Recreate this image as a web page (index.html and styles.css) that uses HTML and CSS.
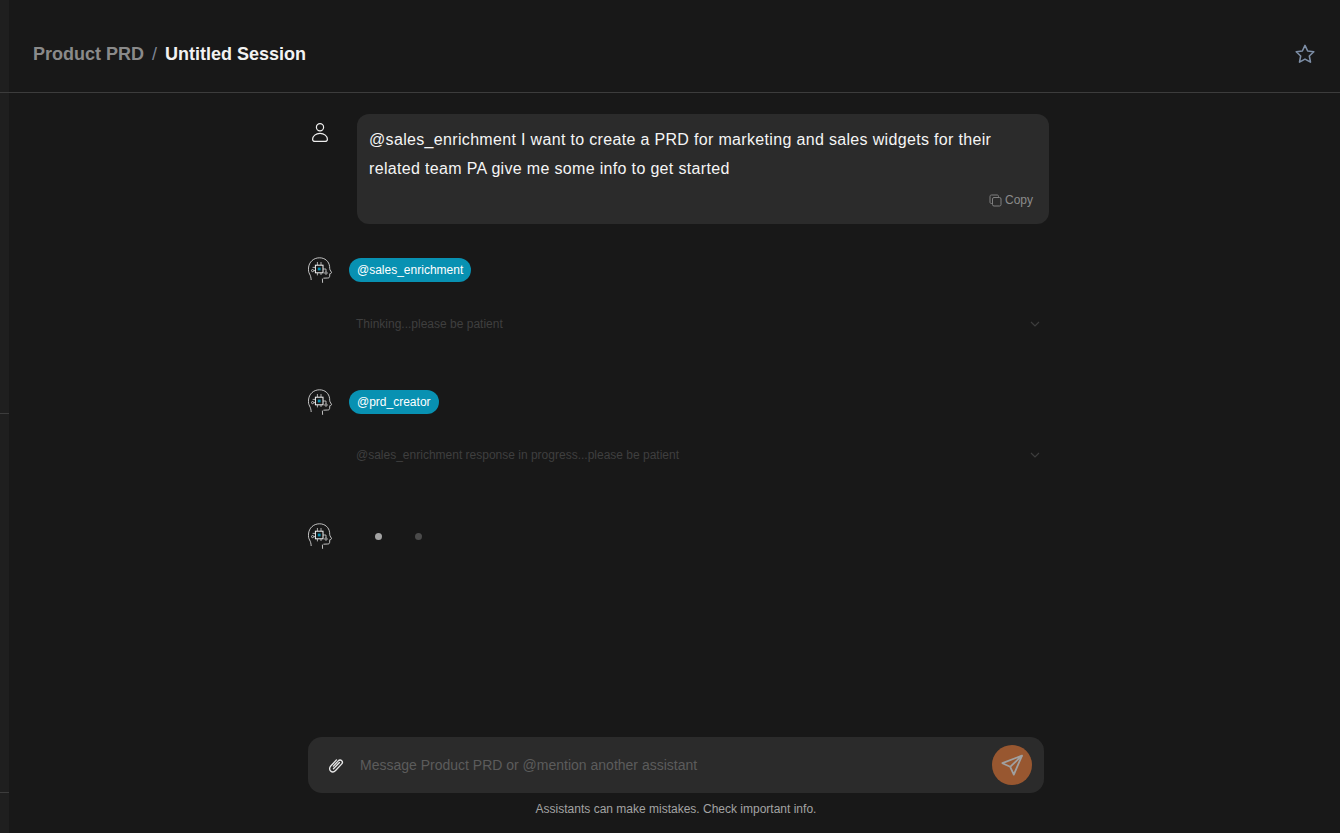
FILE: index.html
```html
<!DOCTYPE html>
<html lang="en">
<head>
  <meta charset="UTF-8">
  <meta name="viewport" content="width=device-width, initial-scale=1.0">
  <title>Product PRD</title>
  <link rel="stylesheet" href="styles.css">
</head>
<body>
  <svg class="defs" width="0" height="0" aria-hidden="true">
    <symbol id="bot" viewBox="0 0 24 26">
      <path d="M3.2 23 C3 20.4 2.6 18.8 1.6 17 C.6 15.2 .3 13.6 .5 11 C1 5 5.5 .8 11.5 .8 C17 .8 21 4.4 21.6 9.5 C21.7 11 21.6 12 22 12.8 L23.4 15.2 C23.7 15.8 23.4 16.3 22.6 16.5 L21.8 16.7 L21.6 19.6 C21.5 20.6 20.8 21 19.6 21 L15.4 21.2" fill="none" stroke="#ececec" stroke-width=".8"/>
      <path d="M14.4 21.6 L14.6 25.8" fill="none" stroke="#ececec" stroke-width=".8"/>
      <rect x="7.4" y="8.2" width="7.6" height="7.6" fill="none" stroke="#f5f5f5" stroke-width="1"/>
      <rect x="9.8" y="10.6" width="2.8" height="2.8" fill="#0891b2"/>
      <path d="M9.4 8 V5 M13 8 V5 M9.4 16 V18.4 M13 16 V18 M7.4 10.4 H4.6 M7.4 13.6 H5.8 M15 12 H18 V14.6" fill="none" stroke="#ececec" stroke-width=".7"/>
      <circle cx="4.6" cy="13.6" r="1.1" fill="none" stroke="#ececec" stroke-width=".7"/>
      <circle cx="18" cy="16" r="1.2" fill="none" stroke="#ececec" stroke-width=".7"/>
    </symbol>
    <symbol id="chevron" viewBox="0 0 12 12">
      <path d="M2 4 L6 8 L10 4" fill="none" stroke="#3d3d3d" stroke-width="1.2"/>
    </symbol>
  </svg>

  <aside class="rail">
    <div class="rail-top"></div>
    <div class="rail-mid"></div>
    <div class="rail-low"></div>
  </aside>

  <main class="main">
    <header class="topbar">
      <div class="crumbs">
        <span class="crumb-parent">Product PRD</span>
        <span class="crumb-sep">/</span>
        <span class="crumb-current">Untitled Session</span>
      </div>
      <button class="star" aria-label="Favourite">
        <svg width="22" height="22" viewBox="0 0 24 24" fill="none" stroke="#7d8ea6" stroke-width="1.7" stroke-linejoin="round">
          <path d="M12 2.6 L14.9 8.7 L21.6 9.6 L16.7 14.2 L18 20.9 L12 17.6 L6 20.9 L7.3 14.2 L2.4 9.6 L9.1 8.7 Z"/>
        </svg>
      </button>
    </header>

    <section class="chat">
      <div class="user-row">
        <svg class="user-icon" width="24" height="24" viewBox="0 0 24 24" fill="none" stroke="#eee" stroke-width="1.2">
          <circle cx="12" cy="6.2" r="3.6"/>
          <path d="M12 12.4 C7.8 12.4 4.6 15 4.6 18.2 C4.6 19.6 5.6 20.4 7 20.4 H17 C18.4 20.4 19.4 19.6 19.4 18.2 C19.4 15 16.2 12.4 12 12.4 Z"/>
        </svg>
        <div class="bubble">
          <p class="bubble-text">@sales_enrichment I want to create a PRD for marketing and sales widgets for their related team PA give me some info to get started</p>
          <div class="copy">
            <svg width="13" height="13" viewBox="0 0 13 13" fill="none" stroke="#808080" stroke-width="1">
              <rect x="3.5" y="3.5" width="8.5" height="8.5" rx="1.5"/>
              <path d="M3.5 9.5 H2.5 C1.4 9.5 1 9 1 8 V2.5 C1 1.5 1.5 1 2.5 1 H8 C9 1 9.5 1.4 9.5 2.5 V3.5"/>
            </svg>
            <span>Copy</span>
          </div>
        </div>
      </div>

      <div class="bot-row first">
        <svg class="bot-icon" width="24" height="26"><use href="#bot"/></svg>
        <span class="tag">@sales_enrichment</span>
      </div>
      <div class="status first-status">
        <span>Thinking...please be patient</span>
        <svg width="12" height="12"><use href="#chevron"/></svg>
      </div>

      <div class="bot-row second">
        <svg class="bot-icon" width="24" height="26"><use href="#bot"/></svg>
        <span class="tag">@prd_creator</span>
      </div>
      <div class="status second-status">
        <span>@sales_enrichment response in progress...please be patient</span>
        <svg width="12" height="12"><use href="#chevron"/></svg>
      </div>

      <div class="bot-row third">
        <svg class="bot-icon" width="24" height="26"><use href="#bot"/></svg>
        <div class="dots">
          <span class="dot bright"></span>
          <span class="dot dim"></span>
        </div>
      </div>
    </section>

    <footer class="composer">
      <div class="input-box">
        <svg class="clip" width="18" height="18" viewBox="0 0 24 24" fill="none" stroke="#e8e8e8" stroke-width="1.8" stroke-linecap="round">
          <path d="M8.5 13.5 L15 6.5 C16.4 5 18.4 5 19.6 6.2 C20.8 7.4 20.8 9.3 19.4 10.8 L11.4 19.4 C9.4 21.5 6.6 21.6 4.8 19.9 C3 18.2 3.1 15.4 5 13.4 L12.6 5.2"/>
          <path d="M8.6 17 L16.6 8.6"/>
        </svg>
        <span class="placeholder">Message Product PRD or @mention another assistant</span>
        <button class="send" aria-label="Send">
          <svg width="24" height="24" viewBox="0 0 24 24" fill="none" stroke="#a0a0a0" stroke-width="1.8" stroke-linejoin="round">
            <path d="M22 2.6 L2.4 10.2 L10.2 13.8 L13.8 21.6 Z"/>
            <path d="M10.2 13.8 L22 2.6"/>
          </svg>
        </button>
      </div>
      <p class="disclaimer">Assistants can make mistakes. Check important info.</p>
    </footer>
  </main>
</body>
</html>
```

FILE: styles.css
```css
*{
  padding: 0;
  margin: 0;
  box-sizing: border-box;
}
html, body{
  height: 100%;
}
body{
  display: flex;
  background-color: #181818;
  color: #fff;
  font-family: "Liberation Sans", Arial, sans-serif;
  overflow: hidden;
}
.defs{
  position: absolute;
}
.rail{
  width: 9px;
  flex-shrink: 0;
  background-color: #1f1f1f;
}
.rail-top{
  height: 93px;
  border-bottom: 1px solid #3c3c3c;
}
.rail-mid{
  height: 321px;
  border-bottom: 1px solid #3c3c3c;
}
.rail-low{
  height: 379px;
  border-bottom: 1px solid #3c3c3c;
}
.main{
  flex: 1;
  display: flex;
  flex-direction: column;
  min-width: 0;
}
.topbar{
  height: 93px;
  flex-shrink: 0;
  display: flex;
  align-items: center;
  justify-content: space-between;
  padding: 16px 24px 0 24px;
  border-bottom: 1px solid #3c3c3c;
}
.crumbs{
  display: flex;
  gap: 8px;
  font-size: 18px;
  font-weight: 700;
}
.crumb-parent{
  color: #8a8a8a;
}
.crumb-sep{
  color: #7d8494;
  font-weight: 400;
}
.crumb-current{
  color: #f2f2f2;
}
.star{
  display: flex;
  background: none;
  border: none;
}
.chat{
  flex: 1;
  width: 741px;
  margin-left: 299px;
}
.user-row{
  display: flex;
  gap: 25px;
  padding-top: 21px;
}
.user-icon{
  margin-top: 7px;
  flex-shrink: 0;
}
.bubble{
  width: 692px;
  height: 110px;
  padding: 11px 12px 0;
  background-color: #2b2b2b;
  border-radius: 12px;
}
.bubble-text{
  font-size: 16px;
  line-height: 29px;
  letter-spacing: .33px;
  color: #f5f5f5;
}
.copy{
  display: flex;
  align-items: center;
  justify-content: flex-end;
  gap: 3px;
  padding-right: 4px;
  margin-top: 10px;
  font-size: 12px;
  color: #8c8c8c;
}
.bot-row{
  display: flex;
  align-items: center;
  gap: 17px;
}
.bot-row.first{
  margin-top: 33px;
}
.bot-row.second{
  margin-top: 58px;
}
.bot-row.third{
  margin-top: 61px;
}
.bot-icon{
  flex-shrink: 0;
}
.tag{
  height: 24px;
  padding: 0 8px;
  border-radius: 12px;
  background-color: #0891b2;
  color: #fff;
  font-size: 12px;
  line-height: 24px;
}
.status{
  display: flex;
  align-items: center;
  justify-content: space-between;
  width: 685px;
  margin-left: 48px;
  font-size: 12px;
  color: #3f3f3f;
}
.first-status{
  margin-top: 34px;
}
.second-status{
  margin-top: 33px;
}
.dots{
  display: flex;
  gap: 33px;
  padding-left: 26px;
}
.dot{
  width: 7px;
  height: 7px;
  border-radius: 50%;
}
.dot.bright{
  background-color: #a3a3a3;
}
.dot.dim{
  background-color: #4a4a4a;
}
.composer{
  flex-shrink: 0;
  width: 736px;
  margin-left: 299px;
  padding-bottom: 17px;
}
.input-box{
  display: flex;
  align-items: center;
  height: 56px;
  padding: 0 12px 0 19px;
  background-color: #2b2b2b;
  border-radius: 14px;
}
.clip{
  flex-shrink: 0;
}
.placeholder{
  flex: 1;
  margin-left: 15px;
  font-size: 14px;
  color: #5c5c5c;
}
.send{
  display: flex;
  align-items: center;
  justify-content: center;
  width: 40px;
  height: 40px;
  border: none;
  border-radius: 50%;
  background-color: #985730;
}
.disclaimer{
  margin-top: 9px;
  text-align: center;
  font-size: 12px;
  line-height: 14px;
  color: #a3a3a3;
}
```
